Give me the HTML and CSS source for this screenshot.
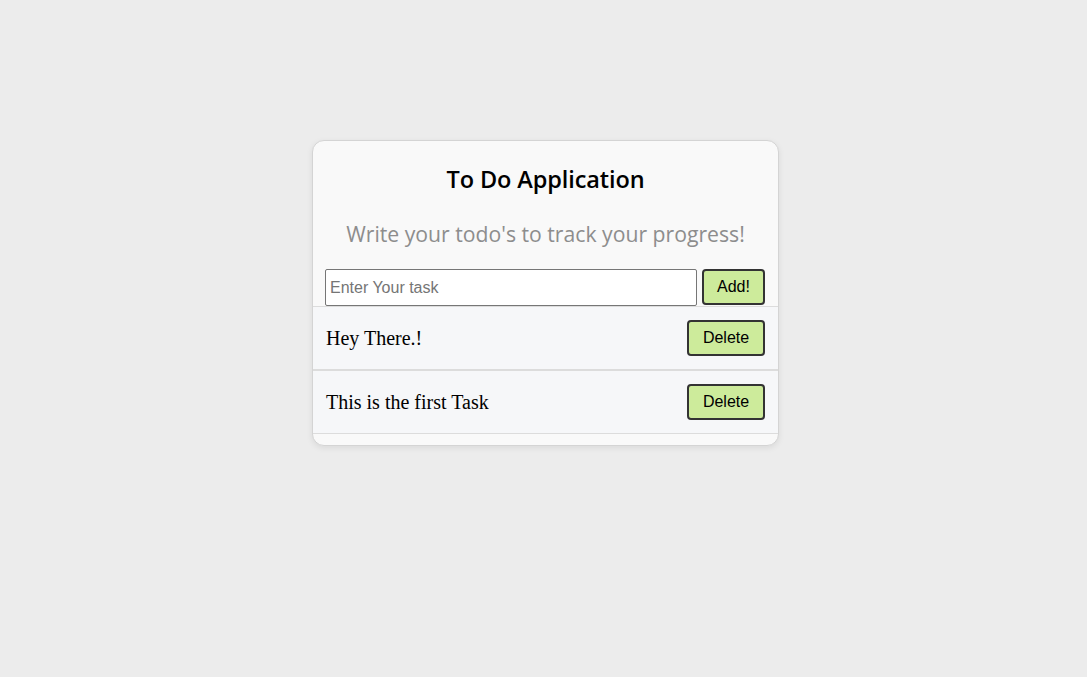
FILE: index.html
```html
<!DOCTYPE html>
<html>
<head>
<meta charset="utf-8">
<link rel="stylesheet" href="styles.css">
</head>
<body>
<div class="card">
  <h2 class="title">To Do Application</h2>
  <p class="subtitle">Write your todo's to track your progress!</p>
  <div class="form">
    <input class="task-input" type="text" placeholder="Enter Your task">
    <button class="btn add">Add!</button>
  </div>
  <ul class="list">
    <li class="item"><span class="item-text">Hey There.!</span><button class="btn del">Delete</button></li>
    <li class="item"><span class="item-text">This is the first Task</span><button class="btn del">Delete</button></li>
  </ul>
</div>
</body>
</html>
```

FILE: styles.css
```css
html, body { margin: 0; padding: 0; }
body {
  background: #ececec;
  height: 677px;
  display: flex;
  justify-content: flex-start;
  padding-top: 140px;
  padding-left: 312px;
  box-sizing: border-box;
}
.card {
  width: 467px;
  height: 306px;
  box-sizing: border-box;
  background: #f9f9f9;
  border: 1px solid #d4d4d4;
  border-radius: 12px;
  box-shadow: 0 2px 6px rgba(0,0,0,0.08);
  display: flex;
  flex-direction: column;
  overflow: hidden;
}
.title {
  margin: 23px 0 0;
  text-align: center;
  font-family: "Open Sans", sans-serif;
  font-weight: 600;
  font-size: 23.5px;
  line-height: 30px;
  color: #000;
  letter-spacing: -0.1px;
}
.subtitle {
  margin: 25px 0 0;
  text-align: center;
  font-family: "Open Sans", sans-serif;
  font-size: 21.2px;
  line-height: 30px;
  color: #8d8d8d;
}
.form {
  display: flex;
  gap: 5px;
  padding: 0 12px;
  margin-top: 20px;
  height: 37px;
}
.task-input {
  width: 372px;
  height: 37px;
  box-sizing: border-box;
  border: 1px solid #767676;
  border-radius: 2px;
  padding: 0 4px;
  font-family: "Liberation Sans", Arial, sans-serif;
  font-size: 16px;
  background: #fff;
}
.task-input::placeholder { color: #757575; }
.btn {
  background: #cdeb9b;
  border: 2px solid #333;
  border-radius: 4px;
  font-family: "Liberation Sans", Arial, sans-serif;
  font-size: 16px;
  color: #000;
  padding: 0;
  box-sizing: border-box;
}
.add { width: 63px; height: 36px; }
.list {
  list-style: none;
  margin: 0;
  padding: 0;
}
.item {
  display: flex;
  align-items: center;
  justify-content: space-between;
  height: 64px;
  box-sizing: border-box;
  background: #f6f7f9;
  border-top: 1px solid #dcdcdc;
  border-bottom: 1px solid #dcdcdc;
  padding: 0 13px 0 13px;
}
.item-text {
  font-family: "Liberation Serif", "Times New Roman", serif;
  font-size: 20px;
  color: #000;
}
.del { width: 78px; height: 36px; }
```
